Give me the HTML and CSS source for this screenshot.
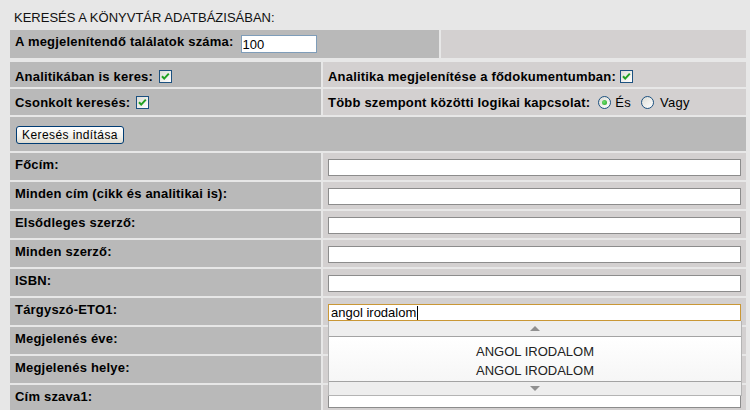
FILE: index.html
```html
<!DOCTYPE html>
<html lang="hu">
<head>
    <meta charset="UTF-8">
    <meta name="viewport" content="width=device-width, initial-scale=1.0">
    <title>Keresés a könyvtár adatbázisában</title>
    <link rel="stylesheet" href="styles.css">
</head>
<body>
    <div class="page">
        <div class="title">KERESÉS A KÖNYVTÁR ADATBÁZISÁBAN:</div>

        <div class="row row-limit">
            <div class="cell dark limit-cell">
                <span class="lbl lbl-limit">A megjelenítendő találatok száma:</span>
                <input class="num" type="text" value="100">
            </div>
            <div class="cell light grow"></div>
        </div>

        <div class="form">
            <div class="row row-opt1">
                <div class="cell dark col-left">
                    <span class="lbl">Analitikában is keres:</span>
                    <span class="check"><svg width="13" height="13" viewBox="0 0 13 13"><path d="M3 6.2 L5.2 8.6 L9.8 3.6" fill="none" stroke="#21a121" stroke-width="2"/></svg></span>
                </div>
                <div class="cell light grow">
                    <span class="lbl">Analitika megjelenítése a fődokumentumban:</span>
                    <span class="check check-right"><svg width="13" height="13" viewBox="0 0 13 13"><path d="M3 6.2 L5.2 8.6 L9.8 3.6" fill="none" stroke="#21a121" stroke-width="2"/></svg></span>
                </div>
            </div>

            <div class="row row-opt2">
                <div class="cell dark col-left">
                    <span class="lbl">Csonkolt keresés:</span>
                    <span class="check"><svg width="13" height="13" viewBox="0 0 13 13"><path d="M3 6.2 L5.2 8.6 L9.8 3.6" fill="none" stroke="#21a121" stroke-width="2"/></svg></span>
                </div>
                <div class="cell light grow">
                    <span class="lbl">Több szempont közötti logikai kapcsolat:</span>
                    <span class="radio radio-first selected"></span><span class="opt">És</span>
                    <span class="radio"></span><span class="opt opt-last">Vagy</span>
                </div>
            </div>

            <div class="row row-submit">
                <div class="cell dark grow">
                    <button class="submit">Keresés indítása</button>
                </div>
            </div>

            <div class="row field">
                <div class="cell dark col-left field-label"><span class="lbl">Főcím:</span></div>
                <div class="cell light grow field-input"><input class="text" type="text"></div>
            </div>
            <div class="row field">
                <div class="cell dark col-left field-label"><span class="lbl">Minden cím (cikk és analitikai is):</span></div>
                <div class="cell light grow field-input"><input class="text" type="text"></div>
            </div>
            <div class="row field">
                <div class="cell dark col-left field-label"><span class="lbl">Elsődleges szerző:</span></div>
                <div class="cell light grow field-input"><input class="text" type="text"></div>
            </div>
            <div class="row field">
                <div class="cell dark col-left field-label"><span class="lbl">Minden szerző:</span></div>
                <div class="cell light grow field-input"><input class="text" type="text"></div>
            </div>
            <div class="row field">
                <div class="cell dark col-left field-label"><span class="lbl">ISBN:</span></div>
                <div class="cell light grow field-input"><input class="text" type="text"></div>
            </div>
            <div class="row field">
                <div class="cell dark col-left field-label"><span class="lbl">Tárgyszó-ETO1:</span></div>
                <div class="cell light grow field-input">
                    <div class="combo">
                        <div class="text focused">angol irodalom<span class="caret"></span></div>
                        <div class="suggest">
                            <div class="scroll"><span class="arrow-up"></span></div>
                            <div class="items">
                                <div class="item">ANGOL IRODALOM</div>
                                <div class="item">ANGOL IRODALOM</div>
                            </div>
                            <div class="scroll scroll-down"><span class="arrow-down"></span></div>
                        </div>
                    </div>
                </div>
            </div>
            <div class="row field">
                <div class="cell dark col-left field-label"><span class="lbl">Megjelenés éve:</span></div>
                <div class="cell light grow field-input"><input class="text" type="text"></div>
            </div>
            <div class="row field">
                <div class="cell dark col-left field-label"><span class="lbl">Megjelenés helye:</span></div>
                <div class="cell light grow field-input"><input class="text" type="text"></div>
            </div>
            <div class="row field">
                <div class="cell dark col-left field-label"><span class="lbl">Cím szava1:</span></div>
                <div class="cell light grow field-input"><input class="text" type="text"></div>
            </div>
        </div>
    </div>
</body>
</html>
```

FILE: styles.css
```css
html, body {
    height: 410px;
    overflow: hidden;
}

body {
    margin: 0;
    background: #e7e7e7;
    font-family: "Liberation Sans", Arial, sans-serif;
    font-size: 13px;
    color: #000;
}

.page {
    width: 736px;
    padding-left: 10px;
}

.title {
    height: 25px;
    line-height: 25px;
    padding-top: 5px;
    padding-left: 4px;
    font-size: 13px;
    color: #111;
}

.row {
    display: flex;
    gap: 2px;
}

.cell {
    display: flex;
    align-items: center;
    padding: 0 5px;
    box-sizing: border-box;
}

.dark {
    background: #b9b9b9;
}

.light {
    background: #d3d0d0;
}

.grow {
    flex: 1;
}

.col-left {
    width: 311px;
    flex: none;
}

.lbl {
    font-weight: bold;
    letter-spacing: 0.2px;
    white-space: nowrap;
}

/* first row: result limit */
.row-limit {
    height: 28px;
    margin-bottom: 4px;
}

.limit-cell {
    width: 429px;
    flex: none;
}

.lbl-limit {
    margin-bottom: 6px;
}

.num {
    width: 76px;
    height: 18px;
    margin: 0 0 0 7px;
    padding: 0 1px;
    box-sizing: border-box;
    border: 1px solid #7f9db9;
    background: #fff;
    font-family: "Liberation Sans", Arial, sans-serif;
    font-size: 13px;
    color: #000;
    outline: none;
}

.form {
    display: flex;
    flex-direction: column;
    gap: 2px;
}

.row-opt1 {
    height: 25px;
}

.row-opt1 .cell {
    padding-top: 3px;
}

.row-opt2 {
    height: 26px;
}

.check {
    display: inline-block;
    width: 13px;
    height: 13px;
    margin-left: 6px;
    box-sizing: border-box;
    border: 1px solid #1c5180;
    background: linear-gradient(135deg, #dcdcd5, #fff);
    position: relative;
}

.check svg {
    position: absolute;
    left: -1px;
    top: -1px;
}

.check-right {
    margin-left: 4px;
}

.radio {
    display: inline-block;
    width: 13px;
    height: 13px;
    margin-left: 10px;
    box-sizing: border-box;
    border: 1px solid #1c5180;
    border-radius: 50%;
    background: linear-gradient(135deg, #dcdcd5, #fff);
    position: relative;
}

.radio-first {
    margin-left: 8px;
}

.radio.selected::after {
    content: "";
    position: absolute;
    left: 3px;
    top: 3px;
    width: 5px;
    height: 5px;
    border-radius: 50%;
    background: radial-gradient(circle at 40% 40%, #6fe06f, #21a121);
}

.opt {
    margin-left: 4px;
    letter-spacing: 0.3px;
}

.opt-last {
    margin-left: 6px;
}

/* submit row */
.row-submit {
    height: 34px;
}

.row-submit .cell {
    padding: 2px 6px 0;
}

.submit {
    width: 108px;
    height: 18px;
    padding: 0;
    border: 1px solid #003c74;
    border-radius: 3px;
    background: linear-gradient(to bottom, #ffffff 0%, #f4f3ee 55%, #dedbd0 100%);
    font-family: "Liberation Sans", Arial, sans-serif;
    font-size: 12px;
    letter-spacing: 0.4px;
    color: #000;
    cursor: pointer;
}

/* text field rows */
.field {
    height: 27px;
}

.field-label {
    padding-bottom: 4px;
}

.field-input {
    padding-top: 2px;
}

.text {
    display: block;
    width: 100%;
    height: 17px;
    margin: 0;
    padding: 0 2px;
    box-sizing: border-box;
    border: 1px solid #8c8c8c;
    background: #fff;
    font-family: "Liberation Sans", Arial, sans-serif;
    font-size: 13px;
    line-height: 15px;
    color: #000;
    outline: none;
}

.combo {
    position: relative;
    width: 100%;
}

.focused {
    border-color: #c99736;
    white-space: nowrap;
}

.caret {
    display: inline-block;
    width: 1px;
    height: 14px;
    margin-left: 1px;
    background: #000;
    vertical-align: -3px;
}

.suggest {
    position: absolute;
    left: 0;
    top: 100%;
    width: 414px;
    box-sizing: border-box;
    border: 1px solid #b4b4b4;
    border-top: none;
    background: #fbfbfb;
    z-index: 2;
}

.scroll {
    height: 15px;
    background: #eeeeee;
    border-bottom: 1px solid #a3a3a3;
    display: flex;
    justify-content: center;
    align-items: center;
}

.scroll-down {
    height: 13px;
    border-bottom: none;
    border-top: 1px solid #a3a3a3;
}

.arrow-up {
    width: 0;
    height: 0;
    border-left: 5px solid transparent;
    border-right: 5px solid transparent;
    border-bottom: 5px solid #909090;
}

.arrow-down {
    width: 0;
    height: 0;
    border-left: 5px solid transparent;
    border-right: 5px solid transparent;
    border-top: 5px solid #909090;
}

.items {
    height: 44px;
    padding-top: 5px;
    box-sizing: border-box;
    background: linear-gradient(to bottom, #ffffff, #f6f6f6);
}

.item {
    text-align: center;
    line-height: 19px;
    color: #222;
}
```
